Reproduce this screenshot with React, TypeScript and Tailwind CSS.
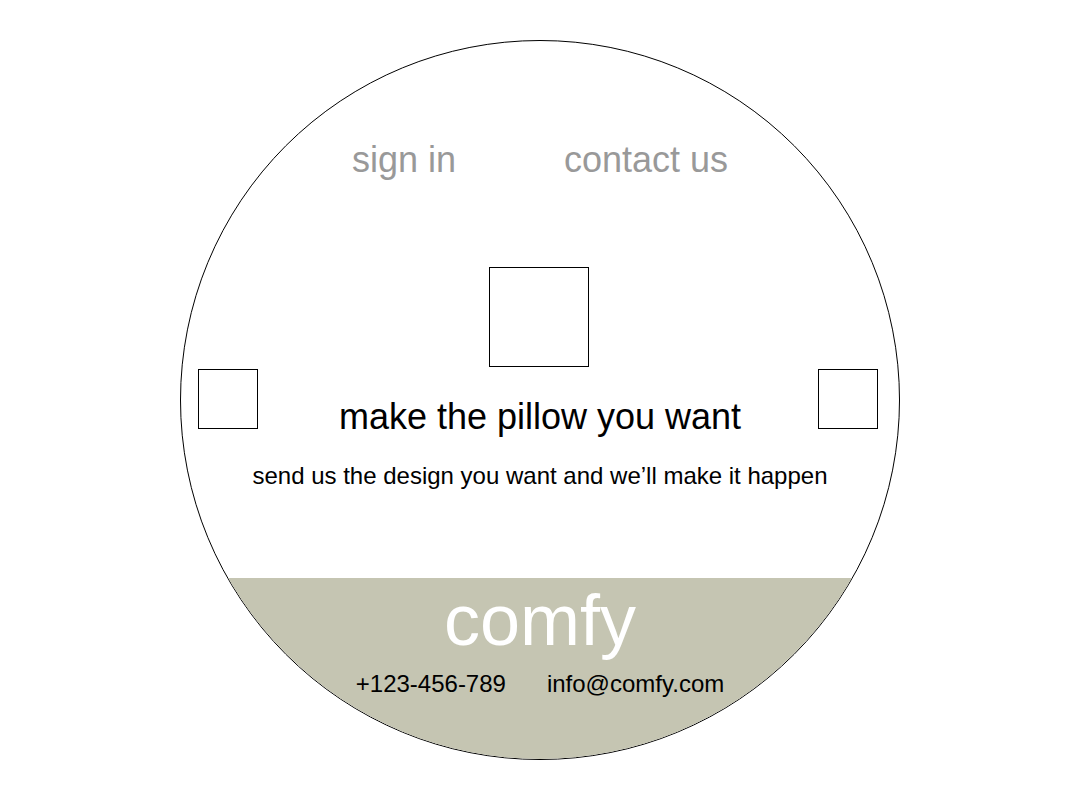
export default function App() {
    return (
        <div className="min-h-screen bg-white pt-[40px] flex justify-center font-['Liberation_Sans',Arial,sans-serif]">
            {/* Round page */}
            <div className="w-[720px] h-[720px] rounded-full border border-black overflow-hidden flex flex-col">

                {/* Nav */}
                <nav className="mt-[101px] flex justify-center gap-[108px] text-[36px] leading-[36px] text-[#999999]">
                    <a>sign in</a>
                    <a>contact us</a>
                </nav>

                {/* Main picture */}
                <div className="mt-[89px] flex justify-center">
                    <div className="w-[100px] h-[100px] border border-black -translate-x-[1px]"></div>
                </div>

                {/* Side pictures and headline */}
                <div className="mt-[2px] grid grid-cols-[1fr_auto_1fr] items-start">
                    <div className="pl-[17px]">
                        <div className="w-[60px] h-[60px] border border-black"></div>
                    </div>
                    <h1 className="pt-[30px] text-[36px] leading-[36px] text-black">make the pillow you want</h1>
                    <div className="pr-[21px] flex justify-end">
                        <div className="w-[60px] h-[60px] border border-black"></div>
                    </div>
                </div>

                <p className="mt-[29px] text-center text-[24px] leading-[24px] text-black">
                    send us the design you want and we’ll make it happen
                </p>

                {/* Footer band */}
                <footer className="mt-[90px] flex-1 bg-[#c5c5b2] flex flex-col items-center">
                    <h2 className="pt-[6px] text-[72px] leading-[72px] text-white">comfy</h2>
                    <div className="mt-[16px] flex gap-[41px] text-[24px] leading-[24px] text-black">
                        <span>+123-456-789</span>
                        <span>info@comfy.com</span>
                    </div>
                </footer>
            </div>
        </div>
    );
}
